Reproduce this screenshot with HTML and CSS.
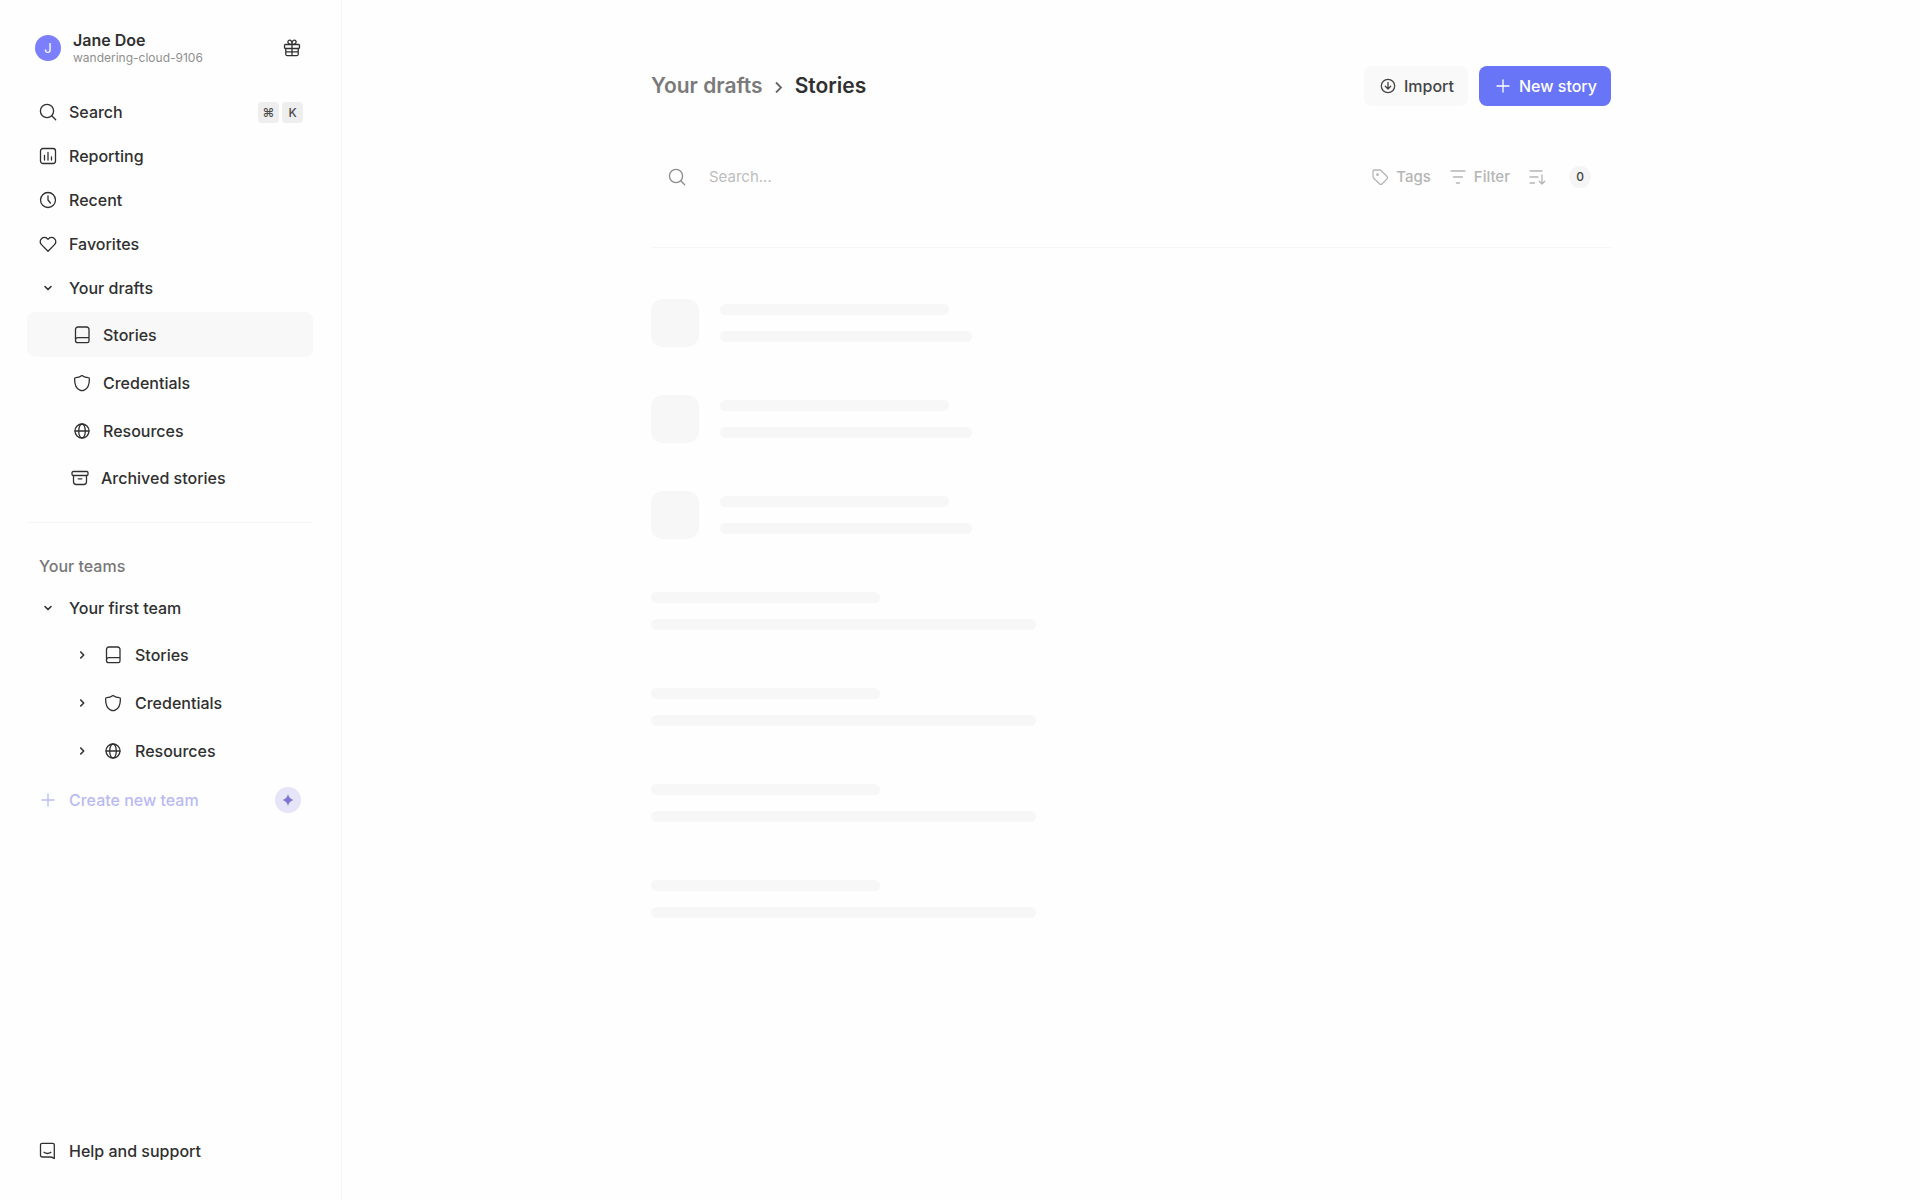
FILE: index.html
```
<!DOCTYPE html>
<html lang="en">
<head>
  <meta charset="UTF-8">
  <title>Stories</title>
  <link rel="stylesheet" href="styles.css">
</head>
<body>

  <!-- Shared icons -->
  <svg class="sprite" aria-hidden="true">
    <symbol id="search" viewBox="0 0 18 18"><circle cx="8" cy="8" r="6.600"/><path d="M12.700 12.700l4 4"/></symbol>
    <symbol id="down" viewBox="0 0 18 18"><path d="M6 7.500l3 3 3-3"/></symbol>
    <symbol id="right" viewBox="0 0 18 18"><path d="M7.700 6l3 3-3 3"/></symbol>
    <symbol id="book" viewBox="0 0 18 18"><path d="M16 12V3.300a2.300 2.300 0 0 0-2.300-2.300H4.800a2.300 2.300 0 0 0-2.300 2.300v11.100A2.300 2.300 0 0 0 4.800 16.700h9.400a1.800 1.800 0 0 0 1.800-1.800v-3.200H4.800a2.300 2.300 0 0 0-2.300 2.300"/></symbol>
    <symbol id="shield" viewBox="0 0 18 18"><path d="M9 1.400c1.900 1.400 4 2.200 6.300 2.300 1 0 1.100.5 1.100 1.400 0 5.600-1.500 9.600-5.200 11.100-1.700.7-2.700.7-4.400 0C3.100 14.700 1.600 10.700 1.600 5.100c0-.9.100-1.400 1.100-1.400C5 3.600 7.100 2.800 9 1.400z"/></symbol>
    <symbol id="globe" viewBox="0 0 18 18"><circle cx="9" cy="9" r="7"/><ellipse cx="9" cy="9" rx="3.300" ry="7"/><path d="M2 9h14"/></symbol>
    <symbol id="plus" viewBox="0 0 18 18"><path d="M9 3v12M3 9h12"/></symbol>
  </svg>

  <div class="app">
    <aside class="sidebar">
      <div class="profile">
        <span class="avatar">J</span>
        <div class="user">
          <div class="user-name">Jane Doe</div>
          <div class="user-tenant">wandering-cloud-9106</div>
        </div>
        <button class="gift" aria-label="What's new">
          <svg class="icon" viewBox="0 0 18 18"><rect x="1.500" y="5.500" width="15" height="4" rx="1"/><path d="M2.800 9.500v5.700a1.500 1.500 0 0 0 1.500 1.500h9.400a1.500 1.500 0 0 0 1.500-1.500V9.500M9 5.500v11.200M2.800 12.800h12.400M9 5.500C7 5.500 4.900 5 4.900 3.100c0-1.200.8-1.900 1.800-1.900C8.400 1.200 9 3.500 9 5.500c0-2 .6-4.300 2.300-4.300 1 0 1.800.7 1.800 1.900C13.100 5 11 5.500 9 5.500"/></svg>
        </button>
      </div>

      <nav>
        <a class="row" href="#">
          <svg class="icon"><use href="#search"/></svg>
          <span class="label">Search</span>
          <span class="keys"><kbd>⌘</kbd><kbd>K</kbd></span>
        </a>
        <a class="row" href="#">
          <svg class="icon" viewBox="0 0 18 18"><rect x="1.500" y="1.500" width="15" height="15" rx="2.500"/><path d="M5.500 8.500V13M9 5.500V13M12.500 10v3"/></svg>
          <span class="label">Reporting</span>
        </a>
        <a class="row" href="#">
          <svg class="icon" viewBox="0 0 18 18"><circle cx="9" cy="9" r="7.500"/><path d="M9 4.800V9l2.400 3"/></svg>
          <span class="label">Recent</span>
        </a>
        <a class="row" href="#">
          <svg class="icon" viewBox="0 0 18 18"><path d="M9 16.300L2.500 9.600a4 4 0 0 1 0-5.900 4.200 4.200 0 0 1 5.900 0L9 4.400l.6-.7a4.200 4.200 0 0 1 5.900 0 4 4 0 0 1 0 5.900z"/></svg>
          <span class="label">Favorites</span>
        </a>
        <a class="row" href="#">
          <svg class="icon bold"><use href="#down"/></svg>
          <span class="label">Your drafts</span>
        </a>
        <div class="subnav">
          <a class="row sub active" href="#">
            <svg class="icon"><use href="#book"/></svg>
            <span class="label">Stories</span>
          </a>
          <a class="row sub" href="#">
            <svg class="icon"><use href="#shield"/></svg>
            <span class="label">Credentials</span>
          </a>
          <a class="row sub" href="#">
            <svg class="icon"><use href="#globe"/></svg>
            <span class="label">Resources</span>
          </a>
          <a class="row sub archived" href="#">
            <svg class="icon" viewBox="0 0 18 18"><rect x="1" y="2.500" width="16" height="4" rx="1.200"/><path d="M2.500 6.500v6.200a2.800 2.800 0 0 0 2.800 2.800h7.400a2.800 2.800 0 0 0 2.800-2.800V6.500M7.200 9.800h3.600"/></svg>
            <span class="label">Archived stories</span>
          </a>
        </div>
      </nav>

      <hr>

      <h2 class="teams-title">Your teams</h2>
      <nav>
        <a class="row" href="#">
          <svg class="icon bold"><use href="#down"/></svg>
          <span class="label">Your first team</span>
        </a>
        <div class="subnav team">
          <a class="row sub" href="#">
            <svg class="icon bold"><use href="#right"/></svg>
            <svg class="icon"><use href="#book"/></svg>
            <span class="label">Stories</span>
          </a>
          <a class="row sub" href="#">
            <svg class="icon bold"><use href="#right"/></svg>
            <svg class="icon"><use href="#shield"/></svg>
            <span class="label">Credentials</span>
          </a>
          <a class="row sub" href="#">
            <svg class="icon bold"><use href="#right"/></svg>
            <svg class="icon"><use href="#globe"/></svg>
            <span class="label">Resources</span>
          </a>
        </div>
        <button class="row create">
          <svg class="icon"><use href="#plus"/></svg>
          <span class="label">Create new team</span>
          <span class="spark">
            <svg viewBox="0 0 12 12"><path d="M6 0c.6 3.200 2.200 4.800 5.400 6C8.200 7.200 6.600 8.800 6 12 5.400 8.800 3.800 7.200.6 6 3.800 4.800 5.400 3.200 6 0z"/></svg>
          </span>
        </button>
      </nav>

      <a class="row help" href="#">
        <svg class="icon" viewBox="0 0 18 18"><path d="M15.300 16.500V3a1.700 1.700 0 0 0-1.700-1.700H3.200A1.700 1.700 0 0 0 1.500 3v10.300A1.700 1.700 0 0 0 3.200 15h7.800c1.600 0 3 .8 4.300 1.500zM5 10.300c2.200 1.500 4.700 1.500 6.900 0"/></svg>
        <span class="label">Help and support</span>
      </a>
    </aside>

    <main>
      <div class="content">
        <header class="page-head">
          <h1 class="crumbs">
            <a href="#">Your drafts</a>
            <svg class="crumb-arrow" viewBox="0 0 12 14"><path d="M3 3.500l5 5-5 5"/></svg>
            <span>Stories</span>
          </h1>
          <button class="btn">
            <svg class="icon" viewBox="0 0 18 18"><circle cx="9" cy="9" r="6.700"/><path d="M9 5.500v6.300M6.300 9.300L9 12l2.700-2.700"/></svg>
            Import
          </button>
          <button class="btn primary">
            <svg class="icon"><use href="#plus"/></svg>
            New story
          </button>
        </header>

        <div class="toolbar">
          <svg class="icon"><use href="#search"/></svg>
          <input type="text" placeholder="Search..." aria-label="Search stories">
          <button class="tool">
            <svg class="icon" viewBox="0 0 18 18"><path d="M2 3.500v4.800c0 .7.300 1.400.8 1.900l5.600 5.500a2 2 0 0 0 2.800 0l4.600-4.600a2 2 0 0 0 0-2.800L10.300 2.800A2.700 2.700 0 0 0 8.400 2H3.500A1.500 1.500 0 0 0 2 3.500z"/><circle cx="6.500" cy="6.700" r=".7"/></svg>
            Tags
          </button>
          <button class="tool">
            <svg class="icon" viewBox="0 0 18 18"><path d="M2 3h14M4.500 9h9M7.500 15h3"/></svg>
            Filter
          </button>
          <button class="tool sort" aria-label="Sort">
            <svg class="icon" viewBox="0 0 18 18"><path d="M2 3h12M2 9h8M2 15h4.500M14 7v9M11.300 13.300L14 16l2.700-2.700"/></svg>
          </button>
          <span class="count">0</span>
        </div>

        <!-- Loading placeholders -->
        <div class="skeletons">
          <div class="skeleton"><div class="tile"></div><div class="lines"><div></div><div></div></div></div>
          <div class="skeleton"><div class="tile"></div><div class="lines"><div></div><div></div></div></div>
          <div class="skeleton"><div class="tile"></div><div class="lines"><div></div><div></div></div></div>
          <div class="skeleton"><div class="lines wide"><div></div><div></div></div></div>
          <div class="skeleton"><div class="lines wide"><div></div><div></div></div></div>
          <div class="skeleton"><div class="lines wide"><div></div><div></div></div></div>
          <div class="skeleton"><div class="lines wide"><div></div><div></div></div></div>
        </div>
      </div>
    </main>
  </div>

</body>
</html>
```
FILE: styles.css
```
* {
  box-sizing: border-box;
}

body {
  margin: 0;
  font-family: Inter, "Liberation Sans", sans-serif;
  font-size: 16px;
  font-weight: 500;
  line-height: 20px;
  color: #303030;
  background: #fefefe;
}

a {
  color: inherit;
  text-decoration: none;
}

button {
  font: inherit;
  color: inherit;
  background: none;
  border: 0;
  padding: 0;
  cursor: pointer;
}

.sprite {
  display: none;
}

.icon {
  width: 18px;
  height: 18px;
  flex-shrink: 0;
  fill: none;
  stroke: currentColor;
  stroke-width: 1.3;
  stroke-linecap: round;
  stroke-linejoin: round;
}

.icon.bold {
  stroke-width: 1.6;
}

.app {
  display: flex;
  min-height: 100vh;
}

/* Sidebar */
.sidebar {
  display: flex;
  flex-direction: column;
  width: 342px;
  flex-shrink: 0;
  padding: 28px 28px 27px 27px;
  border-right: 1px solid #f6f6f6;
}

.profile {
  display: flex;
  align-items: center;
  gap: 12px;
  height: 40px;
  margin-bottom: 22px;
  padding: 0 12px 0 8px;
}

.avatar {
  width: 26px;
  height: 26px;
  border-radius: 50%;
  background: #7b7ffb;
  color: #fff;
  font-size: 13px;
  font-weight: 400;
  line-height: 26px;
  text-align: center;
}

.user {
  flex: 1;
}

.user-name {
  font-weight: 600;
}

.user-tenant {
  font-size: 12px;
  font-weight: 400;
  line-height: 16px;
  color: #8f8f8f;
}

.gift {
  display: flex;
}

.row {
  display: flex;
  align-items: center;
  gap: 12px;
  width: 100%;
  height: 44px;
  padding: 0 10px 0 12px;
  border-radius: 8px;
}

.label {
  flex: 1;
  text-align: left;
}

.keys {
  display: flex;
  gap: 3px;
}

kbd {
  width: 21px;
  height: 21px;
  border-radius: 4px;
  background: #eee;
  color: #4a4a4a;
  font-family: inherit;
  font-size: 12px;
  line-height: 21px;
  text-align: center;
}

.subnav {
  display: flex;
  flex-direction: column;
  gap: 3px;
  padding: 2px 0;
}

.sub {
  height: 45px;
  padding-left: 46px;
}

.archived {
  height: 44px;
  padding-left: 44px;
}

.team .sub {
  gap: 13px;
}

.active {
  background: #f8f8f8;
}

hr {
  width: 100%;
  margin: 20px 0 32px;
  border: 0;
  border-top: 1px solid #f5f5f5;
}

.teams-title {
  margin: 0 0 9px;
  padding-left: 12px;
  font-size: 16px;
  font-weight: 500;
  line-height: 22px;
  color: #777;
}

.create {
  margin-top: 3px;
  padding-right: 12px;
  color: #b9baf3;
}

.spark {
  display: flex;
  align-items: center;
  justify-content: center;
  width: 26px;
  height: 26px;
  border-radius: 50%;
  background: #e6e4f9;
}

.spark svg {
  width: 12px;
  height: 12px;
  fill: #7f74d6;
}

.help {
  margin-top: auto;
}

/* Main area */
main {
  flex: 1;
  padding: 66px 32px;
}

.content {
  max-width: 960px;
  margin: 0 auto;
}

.page-head {
  display: flex;
  align-items: center;
  gap: 11px;
}

.crumbs {
  display: flex;
  align-items: center;
  gap: 10px;
  flex: 1;
  margin: 0;
  font-size: 21px;
  font-weight: 600;
  line-height: 28px;
}

.crumbs a {
  color: #7a7a7a;
}

.crumb-arrow {
  width: 12px;
  height: 14px;
  fill: none;
  stroke: #666;
  stroke-width: 1.8;
}

.btn {
  display: flex;
  align-items: center;
  gap: 7px;
  height: 40px;
  padding: 0 14px 0 15px;
  border-radius: 8px;
  background: #f9f9f9;
  color: #444;
}

.primary {
  background: #6875f7;
  color: #fff;
}

.toolbar {
  display: flex;
  align-items: center;
  height: 142px;
  padding: 0 20px 0 17px;
  border-bottom: 1px solid #f5f5f5;
  color: #b5b5b5;
  font-size: 15px;
}

.toolbar > .icon {
  color: #8c8c8c;
}

.toolbar input {
  flex: 1;
  min-width: 0;
  margin-left: 23px;
  padding: 0;
  border: 0;
  outline: 0;
  background: none;
  font: inherit;
  font-weight: 400;
}

.toolbar input::placeholder {
  color: #bdbdbd;
}

.tool {
  display: flex;
  align-items: center;
  gap: 7px;
  margin-right: 18px;
}

.sort {
  margin-right: 23px;
}

.count {
  width: 22px;
  height: 22px;
  border-radius: 50%;
  background: #f5f5f5;
  color: #444;
  font-size: 12px;
  line-height: 22px;
  text-align: center;
}

/* Skeleton rows */
.skeletons {
  display: flex;
  flex-direction: column;
  gap: 48px;
  padding-top: 51px;
}

.skeleton {
  display: flex;
  gap: 21px;
  height: 48px;
}

.tile {
  width: 48px;
  border-radius: 12px;
  background: #f7f7f7;
}

.lines {
  display: flex;
  flex-direction: column;
  gap: 16px;
  padding-top: 5px;
}

.lines div {
  width: 229px;
  height: 11px;
  border-radius: 6px;
  background: #f7f7f7;
}

.lines div:last-child {
  width: 252px;
}

.wide div:last-child {
  width: 385px;
}
```
